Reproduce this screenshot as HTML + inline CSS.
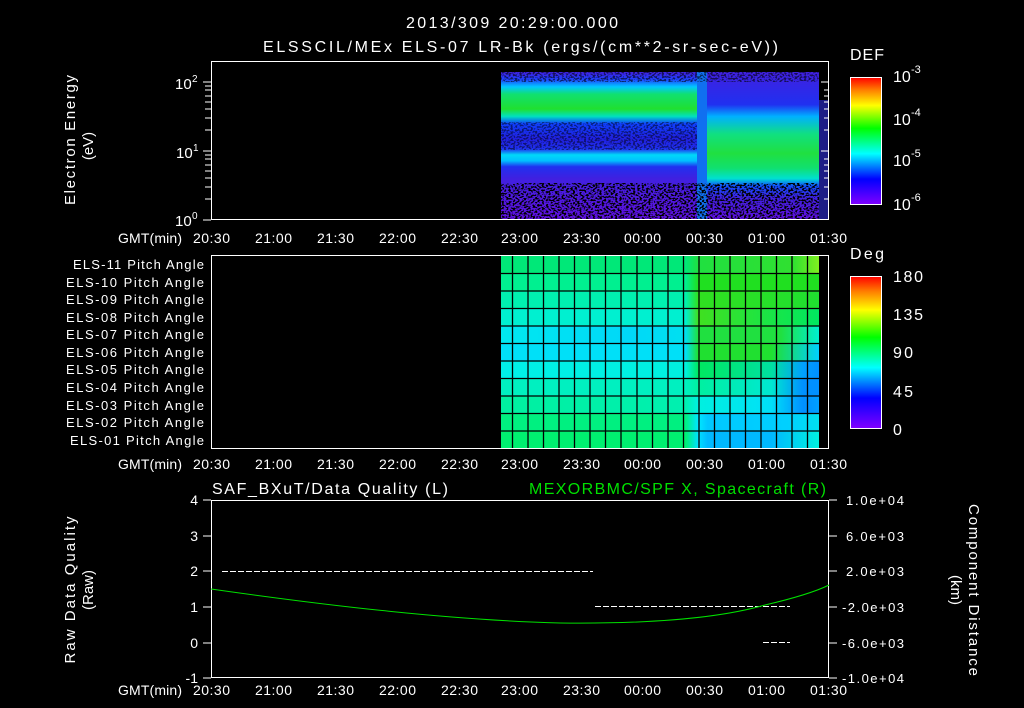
<!DOCTYPE html><html><head><style>
body{margin:0;background:#000;width:1024px;height:708px;overflow:hidden}
svg{display:block}
text{font-family:"Liberation Sans",sans-serif;fill:#fff}
</style></head><body>
<svg width="1024" height="708" viewBox="0 0 1024 708" font-size="14">
<defs>
<filter id="sp" x="0" y="0" width="100%" height="100%">
<feTurbulence type="fractalNoise" baseFrequency="0.45 0.6" numOctaves="1" seed="5" result="t"/>
<feColorMatrix in="t" type="matrix" values="0 0 0 0 0  0 0 0 0 0  0 0 0 0 0  0 0 0 9 -4.3"/>
</filter>
<linearGradient id="lv" x1="0" y1="0" x2="0" y2="1">
<stop offset="0" stop-color="#4020e0"/><stop offset="0.05" stop-color="#2040ff"/>
<stop offset="0.1" stop-color="#00c8ff"/><stop offset="0.15" stop-color="#10e070"/>
<stop offset="0.25" stop-color="#20e030"/><stop offset="0.3" stop-color="#00e0c0"/>
<stop offset="0.35" stop-color="#1040ff"/><stop offset="0.45" stop-color="#2020e0"/>
<stop offset="0.52" stop-color="#2030f0"/><stop offset="0.56" stop-color="#00d8f8"/>
<stop offset="0.6" stop-color="#00c0ff"/><stop offset="0.64" stop-color="#2030f0"/>
<stop offset="0.72" stop-color="#4020e0"/><stop offset="1" stop-color="#6010e0"/>
</linearGradient>
<linearGradient id="rv" x1="0" y1="0" x2="0" y2="1">
<stop offset="0" stop-color="#4020e0"/><stop offset="0.22" stop-color="#2030f0"/>
<stop offset="0.3" stop-color="#00b0ff"/><stop offset="0.42" stop-color="#10e080"/>
<stop offset="0.55" stop-color="#20e040"/><stop offset="0.65" stop-color="#10e070"/>
<stop offset="0.72" stop-color="#00e0d0"/><stop offset="0.77" stop-color="#1050ff"/>
<stop offset="0.85" stop-color="#4020e0"/><stop offset="1" stop-color="#6010e0"/>
</linearGradient>
<linearGradient id="cb1" x1="0" y1="1" x2="0" y2="0">
<stop offset="0" stop-color="#8000ff"/><stop offset="0.2" stop-color="#0000ff"/>
<stop offset="0.4" stop-color="#00ffff"/><stop offset="0.6" stop-color="#00ff00"/>
<stop offset="0.78" stop-color="#ffff00"/><stop offset="0.9" stop-color="#ff8000"/>
<stop offset="1" stop-color="#ff0000"/>
</linearGradient>
</defs>

<text x="512" y="28" text-anchor="middle" font-size="16" textLength="212">2013/309 20:29:00.000</text>
<text x="263" y="52" font-size="16" textLength="515">ELSSCIL/MEx ELS-07 LR-Bk  (ergs/(cm**2-sr-sec-eV))</text>

<!-- top panel data -->
<rect x="501" y="72" width="196" height="148" fill="url(#lv)"/>
<rect x="697" y="72" width="10" height="148" fill="#1070f0"/>
<rect x="707" y="72" width="112" height="148" fill="url(#rv)"/>
<rect x="819" y="100" width="10" height="120" fill="#3030e0" opacity="0.6"/>
<rect x="501" y="183" width="318" height="37" fill="#000" filter="url(#sp)"/>
<rect x="501" y="72" width="318" height="10" fill="#000" filter="url(#sp)" opacity="0.6"/>
<rect x="501" y="122" width="196" height="28" fill="#000" filter="url(#sp)" opacity="0.5"/>
<!-- top axes -->
<rect x="211.5" y="61.5" width="617" height="158" fill="none" stroke="#fff"/>
<g stroke="#fff">
<path d="M203 82h8M203 151h8M203 220h8M205 130h6M205 118h6M205 109h6M205 102h6M205 96h6M205 90h6M205 86h6M205 199h6M205 187h6M205 178h6M205 171h6M205 165h6M205 159h6M205 155h6"/>
<path d="M829 82h-8M829 151h-8M829 130h-5M829 118h-5M829 109h-5M829 199h-5M829 187h-5M829 178h-5M829 171h-5M829 165h-5M829 159h-5M829 102h-5M829 96h-5M829 90h-5"/>
</g>
<text x="-140" y="75" font-size="15" transform="rotate(-90)" text-anchor="middle" textLength="130">Electron Energy</text>
<text x="-146" y="93" font-size="15" transform="rotate(-90)" text-anchor="middle">(eV)</text>
<text x="175" y="89" font-size="15">10</text><text x="192" y="82" font-size="10">2</text>
<text x="176" y="158" font-size="15">10</text><text x="193" y="151" font-size="10">1</text>
<text x="175" y="226" font-size="15">10</text><text x="192" y="219" font-size="10">0</text>
<text x="850" y="60" font-size="16" textLength="34">DEF</text>
<rect x="850.5" y="77.5" width="31" height="127" fill="url(#cb1)" stroke="#fff"/>
<text x="893" y="82" font-size="16">10</text><text x="911" y="73" font-size="11">-3</text>
<text x="893" y="125" font-size="16">10</text><text x="911" y="116" font-size="11">-4</text>
<text x="893" y="166" font-size="16">10</text><text x="911" y="157" font-size="11">-5</text>
<text x="893" y="210" font-size="16">10</text><text x="911" y="201" font-size="11">-6</text>

<g id="tax" font-size="14">
<text x="118" y="243" textLength="64">GMT(min)</text>
<text x="193" y="243" textLength="37">20:30</text><text x="255" y="243" textLength="37">21:00</text><text x="317" y="243" textLength="37">21:30</text><text x="379" y="243" textLength="37">22:00</text><text x="441" y="243" textLength="37">22:30</text><text x="501" y="243" textLength="37">23:00</text><text x="563" y="243" textLength="37">23:30</text><text x="624" y="243" textLength="37">00:00</text><text x="686" y="243" textLength="37">00:30</text><text x="748" y="243" textLength="37">01:00</text><text x="810" y="243" textLength="37">01:30</text>
</g>
<use href="#tax" y="226"/>
<use href="#tax" y="452"/>

<!-- middle panel -->
<defs>
<linearGradient id="r0"><stop offset="0" stop-color="#00e878"/><stop offset="0.58" stop-color="#00e878"/><stop offset="0.62" stop-color="#20e040"/><stop offset="0.92" stop-color="#30e030"/><stop offset="1" stop-color="#80f020"/></linearGradient>
<linearGradient id="r1"><stop offset="0" stop-color="#00f090"/><stop offset="0.58" stop-color="#00f090"/><stop offset="0.62" stop-color="#20e020"/><stop offset="1" stop-color="#20e020"/></linearGradient>
<linearGradient id="r2"><stop offset="0" stop-color="#00f0b0"/><stop offset="0.58" stop-color="#00f0b0"/><stop offset="0.62" stop-color="#30e020"/><stop offset="1" stop-color="#20e030"/></linearGradient>
<linearGradient id="r3"><stop offset="0" stop-color="#00f0d0"/><stop offset="0.58" stop-color="#00f0d0"/><stop offset="0.62" stop-color="#40e020"/><stop offset="1" stop-color="#00e860"/></linearGradient>
<linearGradient id="r4"><stop offset="0" stop-color="#00e8f0"/><stop offset="0.4" stop-color="#00d8f8"/><stop offset="0.58" stop-color="#00e0f0"/><stop offset="0.62" stop-color="#20e040"/><stop offset="0.88" stop-color="#20e040"/><stop offset="1" stop-color="#00f0d0"/></linearGradient>
<linearGradient id="r5"><stop offset="0" stop-color="#00e0f8"/><stop offset="0.58" stop-color="#00e0f8"/><stop offset="0.62" stop-color="#20e030"/><stop offset="0.85" stop-color="#20e030"/><stop offset="1" stop-color="#00d0ff"/></linearGradient>
<linearGradient id="r6"><stop offset="0" stop-color="#00f0e8"/><stop offset="0.58" stop-color="#00f0e0"/><stop offset="0.62" stop-color="#00e860"/><stop offset="0.85" stop-color="#00e0a0"/><stop offset="0.95" stop-color="#00a0ff"/><stop offset="1" stop-color="#0090ff"/></linearGradient>
<linearGradient id="r7"><stop offset="0" stop-color="#00f0c0"/><stop offset="0.58" stop-color="#00f0c0"/><stop offset="0.62" stop-color="#00f0a0"/><stop offset="0.85" stop-color="#00e8d0"/><stop offset="0.95" stop-color="#0090ff"/><stop offset="1" stop-color="#0090ff"/></linearGradient>
<linearGradient id="r8"><stop offset="0" stop-color="#00f0a0"/><stop offset="0.58" stop-color="#00f0b0"/><stop offset="0.62" stop-color="#00f0e0"/><stop offset="0.85" stop-color="#00e0f8"/><stop offset="0.95" stop-color="#0090ff"/><stop offset="1" stop-color="#00a0ff"/></linearGradient>
<linearGradient id="r9"><stop offset="0" stop-color="#00f080"/><stop offset="0.58" stop-color="#00f080"/><stop offset="0.62" stop-color="#00e8ff"/><stop offset="0.65" stop-color="#00c8ff"/><stop offset="0.9" stop-color="#00d0ff"/><stop offset="1" stop-color="#00e0f0"/></linearGradient>
<linearGradient id="r10"><stop offset="0" stop-color="#00f070"/><stop offset="0.58" stop-color="#00f070"/><stop offset="0.62" stop-color="#00e0ff"/><stop offset="0.65" stop-color="#00b8ff"/><stop offset="0.85" stop-color="#00b8ff"/><stop offset="1" stop-color="#00f0e0"/></linearGradient>
</defs>
<rect x="501" y="256" width="318" height="18" fill="url(#r0)"/>
<rect x="501" y="273" width="318" height="18" fill="url(#r1)"/>
<rect x="501" y="291" width="318" height="18" fill="url(#r2)"/>
<rect x="501" y="308" width="318" height="18" fill="url(#r3)"/>
<rect x="501" y="326" width="318" height="18" fill="url(#r4)"/>
<rect x="501" y="344" width="318" height="18" fill="url(#r5)"/>
<rect x="501" y="361" width="318" height="18" fill="url(#r6)"/>
<rect x="501" y="379" width="318" height="18" fill="url(#r7)"/>
<rect x="501" y="396" width="318" height="18" fill="url(#r8)"/>
<rect x="501" y="414" width="318" height="18" fill="url(#r9)"/>
<rect x="501" y="431" width="318" height="18" fill="url(#r10)"/>
<g stroke="#000" stroke-width="1.3">
<path d="M501 273.5h318M501 291h318M501 308.5h318M501 326h318M501 343.5h318M501 361h318M501 378.5h318M501 396h318M501 413.5h318M501 431h318"/>
<path d="M512.5 256v193M528 256v193M543.5 256v193M559 256v193M574.5 256v193M590 256v193M605.5 256v193M621 256v193M637 256v193M652.5 256v193M668 256v193M683.5 256v193M699 256v193M714.5 256v193M730 256v193M745.5 256v193M761 256v193M776.5 256v193M792 256v193M807.5 256v193"/>
</g>
<rect x="211.5" y="255.5" width="617" height="193" fill="none" stroke="#fff"/>
<g font-size="13">
<text x="73" y="269" textLength="131">ELS-11 Pitch Angle</text>
<text x="66" y="287" textLength="138">ELS-10 Pitch Angle</text>
<text x="66" y="304" textLength="138">ELS-09 Pitch Angle</text>
<text x="66" y="322" textLength="138">ELS-08 Pitch Angle</text>
<text x="66" y="339" textLength="138">ELS-07 Pitch Angle</text>
<text x="66" y="357" textLength="138">ELS-06 Pitch Angle</text>
<text x="66" y="374" textLength="138">ELS-05 Pitch Angle</text>
<text x="66" y="392" textLength="138">ELS-04 Pitch Angle</text>
<text x="66" y="410" textLength="138">ELS-03 Pitch Angle</text>
<text x="66" y="427" textLength="138">ELS-02 Pitch Angle</text>
<text x="70" y="445" textLength="134">ELS-01 Pitch Angle</text>
</g>
<text x="850" y="259" font-size="16" textLength="34">Deg</text>
<rect x="850.5" y="276.5" width="31" height="152" fill="url(#cb1)" stroke="#fff"/>
<text x="893" y="282" font-size="16" textLength="30">180</text>
<text x="893" y="320" font-size="16" textLength="30">135</text>
<text x="893" y="358" font-size="16" textLength="20">90</text>
<text x="893" y="397" font-size="16" textLength="20">45</text>
<text x="893" y="435" font-size="16">0</text>

<!-- bottom panel -->
<text x="212" y="494" font-size="16" textLength="236">SAF_BXuT/Data Quality (L)</text>
<text x="529" y="494" font-size="16" textLength="297" style="fill:#00e000">MEXORBMC/SPF X, Spacecraft (R)</text>
<rect x="211.5" y="500.5" width="617" height="177" fill="none" stroke="#fff"/>
<g stroke="#fff">
<path d="M203 500h8M203 536h8M203 571h8M203 607h8M203 643h8M203 678h8M829 500h8M829 536h8M829 571h8M829 607h8M829 643h8M829 678h8"/>
<path d="M222 571.5h371" stroke-dasharray="6 2"/>
<path d="M595 606.5h195" stroke-dasharray="6 2"/>
<path d="M763 642.5h27" stroke-dasharray="6 2"/>
</g>
<path d="M211 589 C330 606 450 620 560 623 C650 624 720 618 765 605 C795 598 815 592 829 585" fill="none" stroke="#00e000"/>
<g font-size="14" text-anchor="end">
<text x="198" y="505">4</text><text x="198" y="541">3</text><text x="198" y="576">2</text><text x="198" y="612">1</text><text x="198" y="648">0</text><text x="198" y="683">-1</text>
</g>
<g font-size="13">
<text x="846" y="505" textLength="58">1.0e+04</text><text x="846" y="541" textLength="58">6.0e+03</text><text x="846" y="576" textLength="58">2.0e+03</text><text x="842" y="612" textLength="62">-2.0e+03</text><text x="842" y="648" textLength="62">-6.0e+03</text><text x="842" y="683" textLength="62">-1.0e+04</text>
</g>
<text x="-590" y="75" font-size="15" transform="rotate(-90)" text-anchor="middle" textLength="147">Raw Data Quality</text>
<text x="-590" y="93" font-size="15" transform="rotate(-90)" text-anchor="middle">(Raw)</text>
<text x="590" y="-969" font-size="15" transform="rotate(90)" text-anchor="middle" textLength="172">Component Distance</text>
<text x="590" y="-951" font-size="15" transform="rotate(90)" text-anchor="middle">(km)</text>
</svg>
</body></html>
